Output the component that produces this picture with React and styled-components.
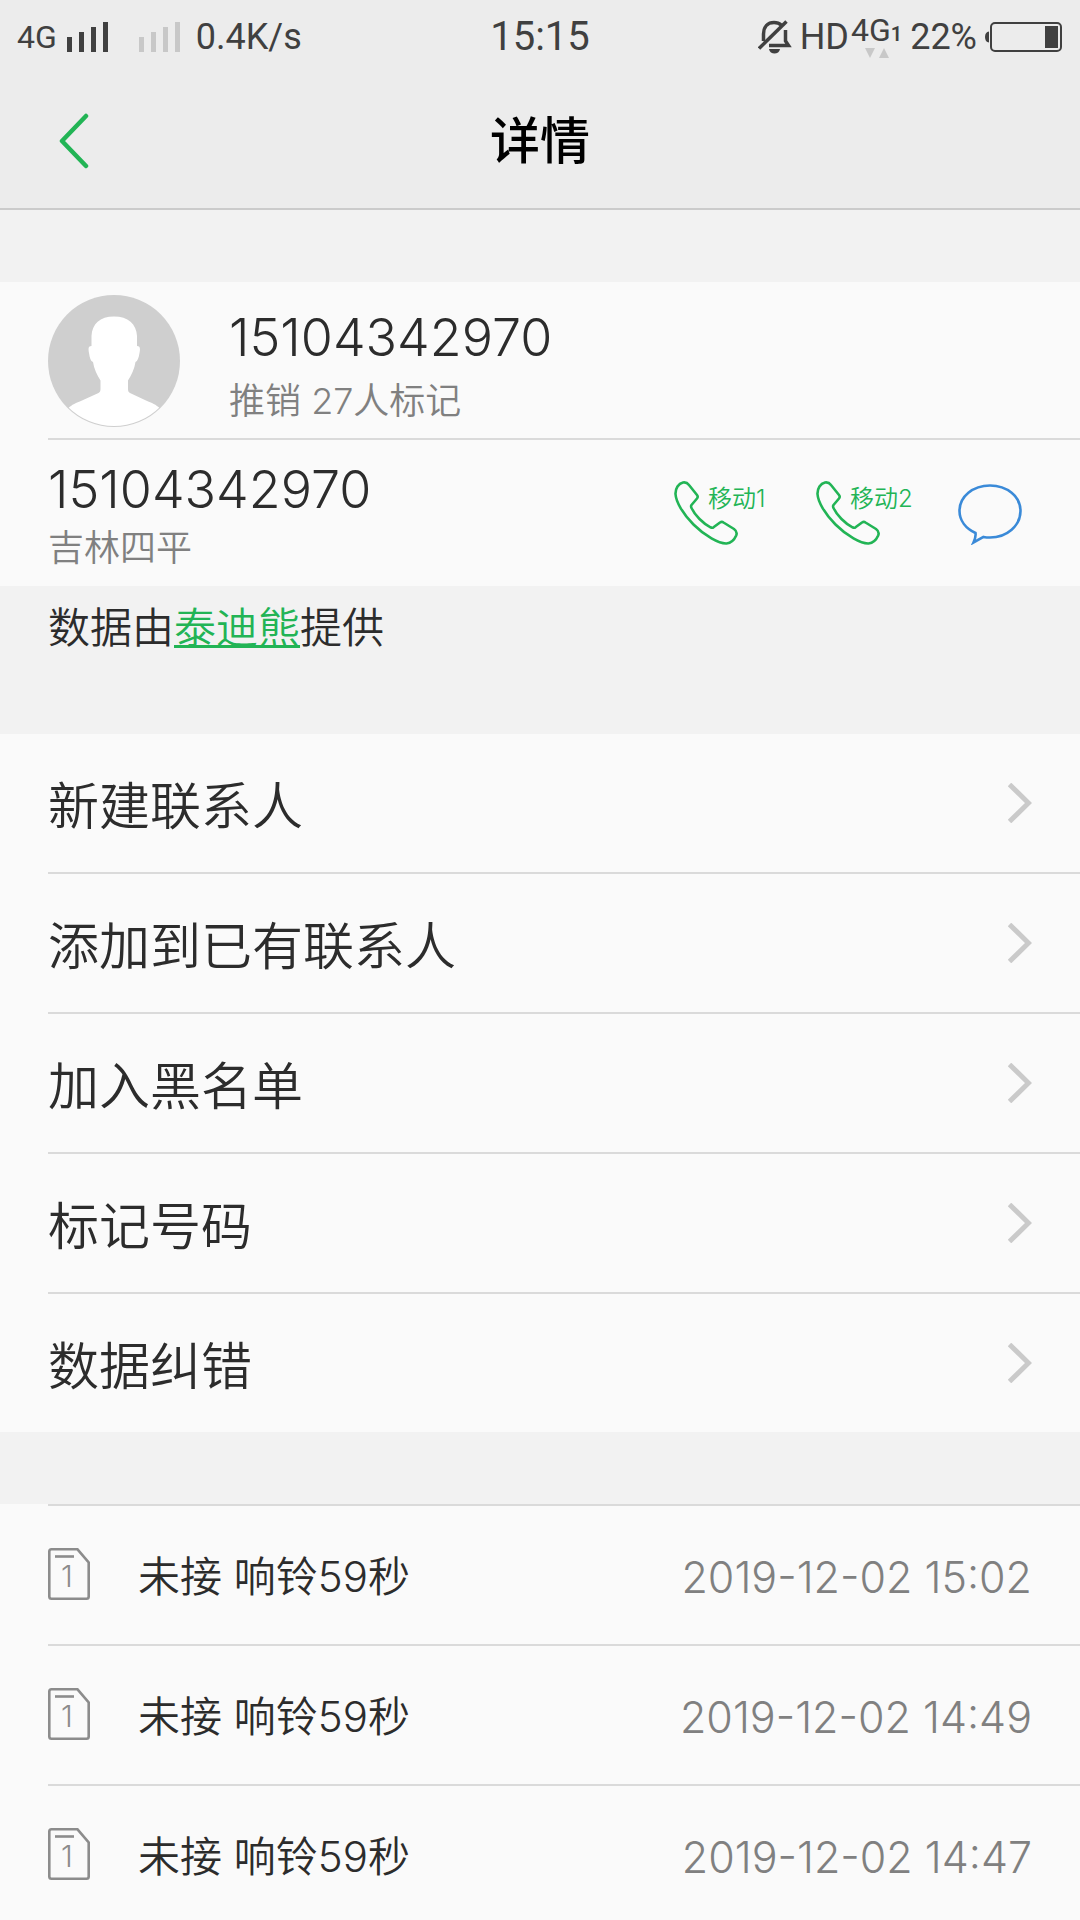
import React from "react";
import styled, { createGlobalStyle } from "styled-components";

const menuItems = [
  "新建联系人",
  "添加到已有联系人",
  "加入黑名单",
  "标记号码",
  "数据纠错",
];

const calls = [
  { id: 1, sim: 1, text: "未接 响铃59秒", time: "2019-12-02 15:02" },
  { id: 2, sim: 1, text: "未接 响铃59秒", time: "2019-12-02 14:49" },
  { id: 3, sim: 1, text: "未接 响铃59秒", time: "2019-12-02 14:47" },
];

function Signal({ color }) {
  return (
    <svg width="42" height="30" viewBox="0 0 42 30" fill={color}>
      <rect x="0" y="15" width="5" height="15" />
      <rect x="12" y="10" width="5" height="20" />
      <rect x="24" y="5" width="5" height="25" />
      <rect x="36" y="0" width="5" height="30" />
    </svg>
  );
}

function MutedBell() {
  return (
    <svg width="34" height="34" viewBox="0 0 34 34" fill="none" stroke="#404040" strokeWidth="3.500">
      <path d="M5.500 21V14C5.500 6.500 10 2.500 16 2.500c3 0 5.500 1 7.500 2.800" />
      <path d="M27.500 10V21l3 4.500H11" />
      <path d="M1 28.500L28.500 1.500" />
      <path d="M11 29h11c-.8 6-10.200 6-11 0z" fill="#404040" stroke="none" />
    </svg>
  );
}

function Battery() {
  return (
    <svg width="78" height="30" viewBox="0 0 78 30">
      <path d="M4 9.500Q0 10 0 15t4 5.500z" fill="#404040" />
      <rect x="6" y="1" width="70" height="28" rx="4" fill="none" stroke="#404040" strokeWidth="2" />
      <rect x="60" y="4" width="13" height="22" fill="#404040" />
    </svg>
  );
}

function Avatar() {
  return (
    <svg width="132" height="132" viewBox="0 0 132 132">
      <clipPath id="face">
        <circle cx="66" cy="66" r="65" />
      </clipPath>
      <circle cx="66" cy="66" r="66" fill="#cfcfcf" />
      <path
        clipPath="url(#face)"
        fill="#fff"
        d="M66 21.500C52 21.500 44 29 43.500 41v10c-3 0-3.500 2-2.500 7 .8 5 1.500 8 4 9 1 7 4 13 7.500 18.500V94c0 2-.5 3-2 4L34 105.500c-6 2.500-10 4-14 8L18 134h96l-2-20.500c-4-4-8-5.500-14-8L82 98c-1.500-1-2-2-2-4v-8.500C83.500 80 86.500 74 87.500 67c2-1 3.200-4 4-9 1-5 .5-7-2.500-7V41C88.500 29 80 21.500 66 21.500z"
      />
    </svg>
  );
}

function Phone() {
  return (
    <svg width="64" height="64" viewBox="0 0 64 64" fill="none" stroke="#22b455" strokeWidth="2.600" strokeLinejoin="round">
      <path d="M1.500 13C1.300 7.500 4.500 2.500 9 1.500c2.500-.4 4.500.5 6 2.500l8 10c1 1.300 1 2.300 0 3.500l-5.500 6.500c-.7 1-.6 1.800 0 3C21 34.500 29 42.500 36.500 46.300c1.300.6 2 .6 3 0L46 41.500c1.300-.8 2.300-.8 3.500 0L60 48c2.500 1.800 3.200 4 2.200 6.500-2 4.500-5.500 7.500-9.700 8C45 62.800 31 55 19.500 43.500 9 33 2 21 1.500 13z" />
    </svg>
  );
}

function Bubble() {
  return (
    <svg width="64" height="64" viewBox="0 0 64 64" fill="none" stroke="#3a8ad8" strokeWidth="2.600">
      <path d="M17.500 52C8 47.500 1.500 39.500 1.500 30 1.500 15.500 15 4.500 32 4.500S62.500 15.500 62.500 30 49 56.500 32 56.500c-2.500 0-4.500-.2-6.500-.6L15.500 61.500c1.800-4 2.500-6.500 2-9.500z" />
    </svg>
  );
}

function SimCard({ slot }) {
  return (
    <Sim>
      <svg width="42" height="52" viewBox="0 0 42 52" fill="none" stroke="#8c8c8c" strokeWidth="2.600">
        <path d="M3.500 1.300H29.500L40.700 14.500V48.500q0 2.200-2.200 2.200H3.500q-2.200 0-2.200-2.200V3.500q0-2.200 2.200-2.200z" />
        <path d="M7 8.500h19" />
      </svg>
      <span>{slot}</span>
    </Sim>
  );
}

export default function App() {
  return (
    <>
      <GlobalStyle />
      <Page>
        <StatusBar>
          <StatusGroup>
            <StatusText $size={32}>4G</StatusText>
            <Bars>
              <Signal color="#404040" />
              <Signal color="#c8c8c8" />
            </Bars>
            <StatusText $size={36}>0.4K/s</StatusText>
          </StatusGroup>
          <StatusText $size={40}>15:15</StatusText>
          <StatusGroup $end>
            <MutedBell />
            <Network>
              <StatusText $size={36}>HD</StatusText>
              <DataType>
                <StatusText $size={32}>
                  4G<small>1</small>
                </StatusText>
                <svg width="24" height="10" viewBox="0 0 24 10" fill="#c8c8c8">
                  <path d="M0 0h10L5 10z" />
                  <path d="M14 10h10L19 0z" />
                </svg>
              </DataType>
            </Network>
            <StatusText $size={36}>22%</StatusText>
            <Battery />
          </StatusGroup>
        </StatusBar>
        <Header>
          <BackButton type="button" aria-label="返回">
            <svg width="30" height="56" viewBox="0 0 30 56" fill="none" stroke="#22b455" strokeWidth="4.500" strokeLinecap="round" strokeLinejoin="round">
              <path d="M27 3L3 28l24 25" />
            </svg>
          </BackButton>
          <h1>详情</h1>
        </Header>
        <main>
          <Panel>
            <Profile>
              <Avatar />
              <ProfileInfo>
                <PhoneNumber>15104342970</PhoneNumber>
                <Note>推销 27人标记</Note>
              </ProfileInfo>
            </Profile>
            <NumberRow>
              <NumberInfo>
                <PhoneNumber>15104342970</PhoneNumber>
                <Note>吉林四平</Note>
              </NumberInfo>
              <Actions>
                <CallButton type="button">
                  <Phone />
                  <span>移动1</span>
                </CallButton>
                <CallButton type="button">
                  <Phone />
                  <span>移动2</span>
                </CallButton>
                <MessageButton type="button" aria-label="短信">
                  <Bubble />
                </MessageButton>
              </Actions>
            </NumberRow>
          </Panel>
          <Provider>
            数据由<a href="#provider">泰迪熊</a>提供
          </Provider>
          <Panel as="nav">
            {menuItems.map((item) => (
              <MenuItem key={item} type="button">
                {item}
                <svg width="24" height="40" viewBox="0 0 24 40" fill="none" stroke="#cacaca" strokeWidth="5">
                  <path d="M1.500 1.500L20.500 20L1.500 38.500" />
                </svg>
              </MenuItem>
            ))}
          </Panel>
          <CallLog>
            {calls.map((call) => (
              <CallRow key={call.id}>
                <SimCard slot={call.sim} />
                <p>{call.text}</p>
                <time>{call.time}</time>
              </CallRow>
            ))}
          </CallLog>
        </main>
      </Page>
    </>
  );
}

const GlobalStyle = createGlobalStyle`
  * {
    box-sizing: border-box;
  }
  body {
    margin: 0;
    background-color: #f2f2f2;
    color: #2c2c2c;
    font-family: Inter, "Noto Sans CJK SC", sans-serif;
    font-weight: 350;
  }
  h1, p, ul {
    margin: 0;
    padding: 0;
  }
  button {
    border: none;
    padding: 0;
    background: none;
    color: inherit;
    font: inherit;
    cursor: pointer;
  }
  svg {
    display: block;
    flex-shrink: 0;
  }
`;

const Page = styled.div`
  height: 100vh;
  overflow: hidden;
`;

const StatusBar = styled.div`
  display: grid;
  grid-template-columns: 1fr auto 1fr;
  align-items: center;
  height: 74px;
  padding: 0 17px;
  background-color: #ececec;
`;

const StatusGroup = styled.div`
  display: flex;
  align-items: center;
  justify-content: ${({ $end }) => ($end ? "flex-end" : "flex-start")};
  gap: ${({ $end }) => ($end ? "8px" : "10px")};
`;

const StatusText = styled.span`
  color: #404040;
  font-family: Roboto, sans-serif;
  font-size: ${({ $size }) => $size}px;
  font-weight: 400;
  line-height: 1;
  small {
    font-size: 20px;
    font-weight: 600;
  }
`;

const Bars = styled.div`
  display: flex;
  gap: 30px;
  margin-right: 5px;
`;

const Network = styled.div`
  display: flex;
  align-items: center;
  gap: 2px;
`;

const DataType = styled.div`
  display: flex;
  flex-direction: column;
  align-items: center;
  ${StatusText} {
    line-height: 28px;
  }
`;

const Header = styled.header`
  display: grid;
  grid-template-columns: 1fr auto 1fr;
  align-items: center;
  height: 136px;
  padding: 0 59px;
  border-bottom: 2px solid #cbcbcb;
  background-color: #ececec;
  h1 {
    color: #000;
    font-size: 50px;
    font-weight: 500;
    line-height: 60px;
  }
`;

const BackButton = styled.button`
  justify-self: start;
`;

const Panel = styled.section`
  margin-top: 72px;
  background-color: #fafafa;
`;

const Profile = styled.div`
  display: flex;
  align-items: center;
  gap: 49px;
  height: 158px;
  margin-left: 48px;
  padding-top: 2px;
  border-bottom: 2px solid #dadada;
`;

const ProfileInfo = styled.div`
  display: grid;
  gap: 5px;
  padding-top: 12px;
`;

const NumberInfo = styled.div`
  padding-top: 8px;
`;

const PhoneNumber = styled.p`
  font-size: 52px;
  line-height: 62px;
`;

const Note = styled.p`
  color: #808080;
  font-size: 36px;
  line-height: 54px;
`;

const NumberRow = styled.div`
  display: flex;
  align-items: center;
  justify-content: space-between;
  height: 146px;
  padding: 0 58px 0 48px;
`;

const Actions = styled.div`
  display: flex;
  gap: 46px;
`;

const CallButton = styled.button`
  display: grid;
  width: 96px;
  color: #22b455;
  svg,
  span {
    grid-area: 1 / 1;
  }
  span {
    padding-left: 34px;
    font-size: 24px;
    line-height: 36px;
    text-align: left;
    white-space: nowrap;
  }
`;

const MessageButton = styled.button`
  width: 64px;
`;

const Provider = styled.p`
  height: 76px;
  padding: 12px 48px;
  font-size: 42px;
  line-height: 60px;
  a {
    color: #22b455;
    text-decoration-thickness: 3px;
    text-underline-offset: 2px;
    text-decoration-skip-ink: none;
  }
`;

const MenuItem = styled.button`
  display: flex;
  align-items: center;
  justify-content: space-between;
  width: calc(100% - 48px);
  height: 140px;
  margin-left: 48px;
  padding-right: 48px;
  border-bottom: 2px solid #dadada;
  font-size: 51px;
  &:last-child {
    height: 138px;
    border-bottom: none;
  }
`;

const CallLog = styled.ul`
  margin-top: 72px;
  padding-left: 48px;
  background-color: #fafafa;
  list-style: none;
`;

const CallRow = styled.li`
  display: flex;
  align-items: center;
  height: 140px;
  padding-right: 48px;
  border-top: 2px solid #dadada;
  p {
    flex: 1;
    margin-left: 48px;
    padding-bottom: 4px;
    font-size: 42px;
  }
  time {
    padding-top: 3px;
    color: #808080;
    font-size: 43px;
  }
`;

const Sim = styled.div`
  display: grid;
  place-items: center;
  padding-bottom: 2px;
  color: #8c8c8c;
  svg,
  span {
    grid-area: 1 / 1;
  }
  span {
    font-size: 30px;
    line-height: 30px;
    padding-top: 4px;
    padding-right: 4px;
  }
`;
